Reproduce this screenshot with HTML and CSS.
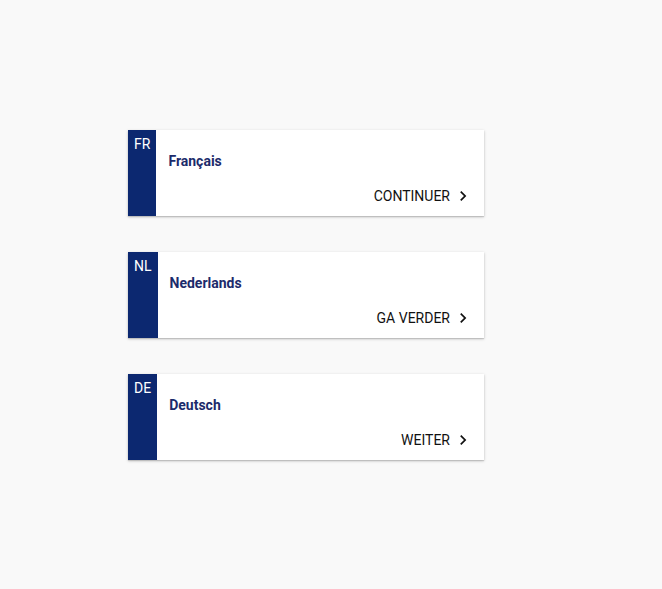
FILE: index.html
```html
<!DOCTYPE html>
<html lang="fr">
<head>
<meta charset="utf-8">
<title>Langues</title>
<link rel="stylesheet" href="styles.css">
</head>
<body>
<main class="list">
  <section class="card">
    <div class="code">FR</div>
    <div class="content">
      <h2 class="title">Français</h2>
      <div class="actions">
        <button class="go">CONTINUER<svg class="chev" viewBox="0 0 24 24" width="20" height="20"><path d="M10 6L8.59 7.41 13.17 12l-4.58 4.59L10 18l6-6z"/></svg></button>
      </div>
    </div>
  </section>
  <section class="card">
    <div class="code">NL</div>
    <div class="content">
      <h2 class="title">Nederlands</h2>
      <div class="actions">
        <button class="go">GA VERDER<svg class="chev" viewBox="0 0 24 24" width="20" height="20"><path d="M10 6L8.59 7.41 13.17 12l-4.58 4.59L10 18l6-6z"/></svg></button>
      </div>
    </div>
  </section>
  <section class="card">
    <div class="code">DE</div>
    <div class="content">
      <h2 class="title">Deutsch</h2>
      <div class="actions">
        <button class="go">WEITER<svg class="chev" viewBox="0 0 24 24" width="20" height="20"><path d="M10 6L8.59 7.41 13.17 12l-4.58 4.59L10 18l6-6z"/></svg></button>
      </div>
    </div>
  </section>
</main>
</body>
</html>
```
FILE: styles.css
```css
html, body {
  margin: 0;
  padding: 0;
}
body {
  background: #f9f9f9;
  font-family: Roboto, "Liberation Sans", sans-serif;
  min-height: 589px;
}
.list {
  display: flex;
  flex-direction: column;
  gap: 36px;
  padding: 130px 0 0 128px;
  width: 356px;
}
.card {
  display: flex;
  height: 86px;
  background: #fff;
  box-shadow: 0 1px 3px rgba(0,0,0,0.2), 0 1px 1px rgba(0,0,0,0.12);
}
.code {
  background: #0c2870;
  color: #fff;
  font-size: 14px;
  line-height: 16px;
  padding: 6px 6px 0 6px;
}
.content {
  flex: 1;
  display: flex;
  flex-direction: column;
  padding: 23px 11px 0 12px;
}
.title {
  margin: 0;
  font-size: 14px;
  line-height: 16px;
  font-weight: 700;
  color: #1c2b6b;
}
.actions {
  display: flex;
  justify-content: flex-end;
  margin-top: 17px;
}
.go {
  display: flex;
  align-items: center;
  gap: 3px;
  border: 0;
  background: none;
  padding: 0;
  font-family: Roboto, "Liberation Sans", sans-serif;
  font-size: 14px;
  line-height: 16px;
  color: #111;
  cursor: pointer;
}
.chev {
  fill: #111;
}
```
